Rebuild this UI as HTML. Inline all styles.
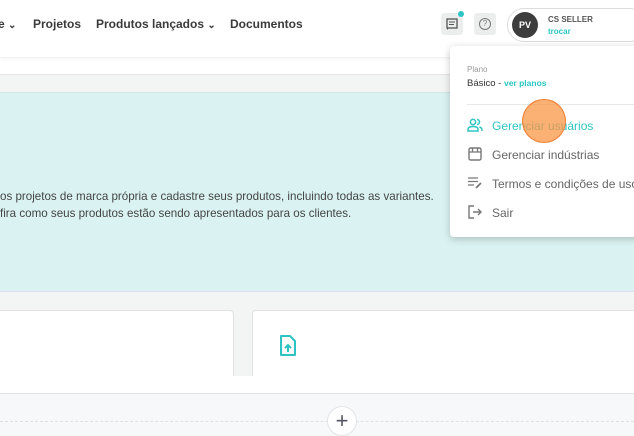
<!DOCTYPE html>
<html><head><meta charset="utf-8"><style>
*{margin:0;padding:0;box-sizing:border-box}
body{width:634px;height:436px;overflow:hidden;position:relative;font-family:"Liberation Sans",sans-serif;background:#fff;color:#333}
.abs{position:absolute}
.nav{font-size:12px;font-weight:bold;color:#3a3a3a;top:17px}
.menu{left:450px;top:46px;width:200px;height:191px;background:#fff;border-radius:4px;box-shadow:0 2px 8px rgba(0,0,0,.22)}
.item{position:absolute;left:42px;font-size:12px;color:#666}
</style></head><body>
<div class="abs" style="left:0;top:0;width:634px;height:57px;background:#fff;box-shadow:0 1px 3px rgba(0,0,0,.08)"></div>
<div class="abs nav" style="left:-2px">e <span style="font-size:10px">&#8964;</span></div>
<div class="abs nav" style="left:33px">Projetos</div>
<div class="abs nav" style="left:96px">Produtos lançados <span style="font-size:10px">&#8964;</span></div>
<div class="abs nav" style="left:230px">Documentos</div>
<div class="abs" style="left:441px;top:13px;width:22px;height:22px;background:#eceeee;border-radius:3px"></div>
<svg class="abs" style="left:445px;top:17px" width="14" height="14" viewBox="0 0 14 14"><rect x="2" y="2" width="10" height="9" fill="none" stroke="#555" stroke-width="1.3"/><path d="M4 5h6M4 7.5h5" stroke="#555" stroke-width="1.1"/><path d="M2 11v2l2-2" fill="#555"/></svg>
<div class="abs" style="left:458px;top:11px;width:6px;height:6px;background:#2ec4c4;border-radius:50%"></div>
<div class="abs" style="left:474px;top:13px;width:22px;height:22px;background:#eceeee;border-radius:3px"></div>
<div class="abs" style="left:479px;top:18px;width:12px;height:12px;border:1.2px solid #777;border-radius:50%;font-size:8px;line-height:10px;text-align:center;color:#777">?</div>
<div class="abs" style="left:507px;top:8px;width:140px;height:34px;border:1px solid #ddd;border-radius:17px"></div>
<div class="abs" style="left:512px;top:12px;width:26px;height:26px;background:#3d3d3d;border-radius:50%;color:#fff;font-size:9px;font-weight:bold;line-height:26px;text-align:center">PV</div>
<div class="abs" style="left:548px;top:15px;font-size:8px;font-weight:bold;color:#555">CS SELLER</div>
<div class="abs" style="left:548px;top:27px;font-size:8px;font-weight:bold;color:#2ec4c4">trocar</div>
<div class="abs" style="left:0;top:74px;width:634px;height:18px;background:#f3f4f4;border-top:1px solid #e4e4e4"></div>
<div class="abs" style="left:0;top:92px;width:634px;height:199px;background:#daf3f2;border-top:1px solid #d0e6e6"></div>
<div class="abs" style="left:0;top:188px;font-size:11.6px;color:#444;line-height:17px;white-space:nowrap">os projetos de marca própria e cadastre seus produtos, incluindo todas as variantes.<br>fira como seus produtos estão sendo apresentados para os clientes.</div>
<div class="abs" style="left:0;top:291px;width:634px;height:85px;background:#f3f4f4;border-top:1px solid #dde"></div>
<div class="abs" style="left:-5px;top:310px;width:239px;height:70px;background:#fff;border:1px solid #e2e2e2;border-radius:4px"></div>
<div class="abs" style="left:252px;top:310px;width:400px;height:70px;background:#fff;border:1px solid #e2e2e2;border-radius:4px"></div>
<svg class="abs" style="left:279px;top:335px" width="18" height="22" viewBox="0 0 18 22"><path d="M2 1h9l5 5v14H2z" fill="none" stroke="#2ec4c4" stroke-width="2" stroke-linejoin="round"/><path d="M9 17v-6M6 13l3-3 3 3" stroke="#2ec4c4" stroke-width="2" fill="none"/></svg>
<div class="abs" style="left:0;top:376px;width:634px;height:17px;background:#fff"></div>
<div class="abs" style="left:0;top:393px;width:634px;height:43px;background:#f7f8fa;border-top:1px solid #dfe1e4"></div>
<div class="abs" style="left:0;top:421px;width:634px;border-top:1px dashed #dde0e5"></div>
<div class="abs" style="left:327px;top:406px;width:30px;height:30px;background:#fff;border:1px solid #e2e4e8;border-radius:50%;color:#556;font-size:22px;line-height:27px;text-align:center">+</div>
<div class="abs menu">
<div class="abs" style="left:17px;top:19px;font-size:8px;color:#999">Plano</div>
<div class="abs" style="left:17px;top:32px;font-size:9.5px;color:#333">Básico - <b style="color:#2ec4c4;font-size:8.5px">ver planos</b></div>
<div class="abs" style="left:17px;top:58px;width:190px;border-top:1px solid #e8e8e8"></div>
<svg class="abs" style="left:17px;top:72px" width="16" height="14" viewBox="0 0 16 14"><circle cx="6" cy="4" r="2.6" fill="none" stroke="#2ec4c4" stroke-width="1.5"/><path d="M1 13v-1.5c0-2 2-3 5-3s5 1 5 3V13z" fill="none" stroke="#2ec4c4" stroke-width="1.5"/><path d="M10 1.5a2.5 2.5 0 010 5M12.5 9c1.5.5 2.5 1.3 2.5 2.5V13" fill="none" stroke="#2ec4c4" stroke-width="1.5"/></svg>
<div class="item" style="top:73px;color:#2ec4c4">Gerenciar usuários</div>
<svg class="abs" style="left:18px;top:101px" width="14" height="14" viewBox="0 0 14 14"><rect x="1" y="1" width="12" height="12" rx="1.5" fill="none" stroke="#777" stroke-width="1.4"/><path d="M1 5h12M4.5 1v4M9.5 1v4" stroke="#777" stroke-width="1.3"/></svg>
<div class="item" style="top:102px">Gerenciar indústrias</div>
<svg class="abs" style="left:18px;top:131px" width="14" height="12" viewBox="0 0 14 12"><path d="M0 1h10M0 4.5h10M0 8h6" stroke="#777" stroke-width="1.3"/><path d="M8 11l5-5" stroke="#777" stroke-width="1.8"/></svg>
<div class="item" style="top:131px">Termos e condições de uso</div>
<svg class="abs" style="left:18px;top:159px" width="14" height="14" viewBox="0 0 14 14"><path d="M6 1H1v12h5" fill="none" stroke="#777" stroke-width="1.4"/><path d="M5 7h8M10 4l3 3-3 3" fill="none" stroke="#777" stroke-width="1.4"/></svg>
<div class="item" style="top:160px">Sair</div>
</div>
<div class="abs" style="left:522px;top:99px;width:44px;height:44px;border-radius:50%;background:rgba(250,150,70,.75);border:1.5px solid rgba(240,120,40,.9)"></div>
</body></html>
